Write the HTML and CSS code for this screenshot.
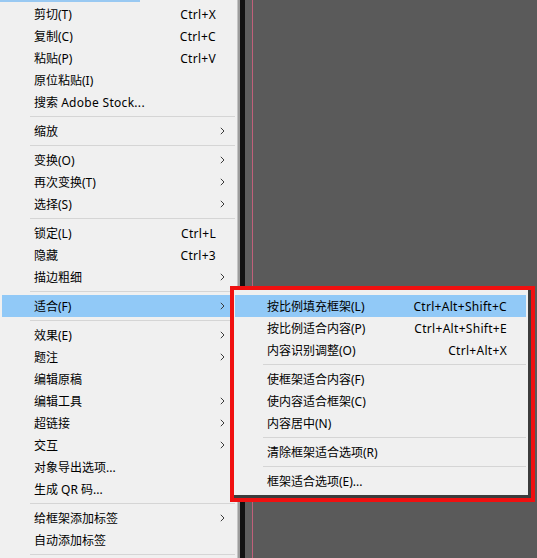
FILE: index.html
```html
<!DOCTYPE html>
<html lang="zh-CN">

<head>
    <meta charset="UTF-8">
    <meta name="viewport" content="width=device-width, initial-scale=1.0">
    <title>适合菜单</title>
    <link rel="stylesheet" href="styles.css">
</head>

<body>
    <div class="app">
        <div class="menu">
            <div class="menubar-hint"></div>
            <div class="item"><span class="label">剪切(T)</span><span class="key">Ctrl+X</span><span class="arrow"></span></div>
            <div class="item"><span class="label">复制(C)</span><span class="key">Ctrl+C</span><span class="arrow"></span></div>
            <div class="item"><span class="label">粘贴(P)</span><span class="key">Ctrl+V</span><span class="arrow"></span></div>
            <div class="item"><span class="label">原位粘贴(I)</span><span class="key"></span><span class="arrow"></span></div>
            <div class="item"><span class="label">搜索 <span class="latin">Adobe Stock...</span></span><span class="key"></span><span class="arrow"></span></div>
            <div class="sep"></div>
            <div class="item"><span class="label">缩放</span><span class="key"></span><span class="arrow"><svg width="5" height="8" viewBox="0 0 5 8"><path d="M0.8 0.8 L4 4 L0.8 7.2" /></svg></span></div>
            <div class="sep"></div>
            <div class="item"><span class="label">变换(O)</span><span class="key"></span><span class="arrow"><svg width="5" height="8" viewBox="0 0 5 8"><path d="M0.8 0.8 L4 4 L0.8 7.2" /></svg></span></div>
            <div class="item"><span class="label">再次变换(T)</span><span class="key"></span><span class="arrow"><svg width="5" height="8" viewBox="0 0 5 8"><path d="M0.8 0.8 L4 4 L0.8 7.2" /></svg></span></div>
            <div class="item"><span class="label">选择(S)</span><span class="key"></span><span class="arrow"><svg width="5" height="8" viewBox="0 0 5 8"><path d="M0.8 0.8 L4 4 L0.8 7.2" /></svg></span></div>
            <div class="sep"></div>
            <div class="item"><span class="label">锁定(L)</span><span class="key">Ctrl+L</span><span class="arrow"></span></div>
            <div class="item"><span class="label">隐藏</span><span class="key">Ctrl+3</span><span class="arrow"></span></div>
            <div class="item"><span class="label">描边粗细</span><span class="key"></span><span class="arrow"><svg width="5" height="8" viewBox="0 0 5 8"><path d="M0.8 0.8 L4 4 L0.8 7.2" /></svg></span></div>
            <div class="sep"></div>
            <div class="item active"><span class="label">适合(F)</span><span class="key"></span><span class="arrow"><svg width="5" height="8" viewBox="0 0 5 8"><path d="M0.8 0.8 L4 4 L0.8 7.2" /></svg></span></div>
            <div class="sep"></div>
            <div class="item"><span class="label">效果(E)</span><span class="key"></span><span class="arrow"><svg width="5" height="8" viewBox="0 0 5 8"><path d="M0.8 0.8 L4 4 L0.8 7.2" /></svg></span></div>
            <div class="item"><span class="label">题注</span><span class="key"></span><span class="arrow"><svg width="5" height="8" viewBox="0 0 5 8"><path d="M0.8 0.8 L4 4 L0.8 7.2" /></svg></span></div>
            <div class="item"><span class="label">编辑原稿</span><span class="key"></span><span class="arrow"></span></div>
            <div class="item"><span class="label">编辑工具</span><span class="key"></span><span class="arrow"><svg width="5" height="8" viewBox="0 0 5 8"><path d="M0.8 0.8 L4 4 L0.8 7.2" /></svg></span></div>
            <div class="item"><span class="label">超链接</span><span class="key"></span><span class="arrow"><svg width="5" height="8" viewBox="0 0 5 8"><path d="M0.8 0.8 L4 4 L0.8 7.2" /></svg></span></div>
            <div class="item"><span class="label">交互</span><span class="key"></span><span class="arrow"><svg width="5" height="8" viewBox="0 0 5 8"><path d="M0.8 0.8 L4 4 L0.8 7.2" /></svg></span></div>
            <div class="item"><span class="label">对象导出选项...</span><span class="key"></span><span class="arrow"></span></div>
            <div class="item"><span class="label">生成 QR 码...</span><span class="key"></span><span class="arrow"></span></div>
            <div class="sep"></div>
            <div class="item"><span class="label">给框架添加标签</span><span class="key"></span><span class="arrow"><svg width="5" height="8" viewBox="0 0 5 8"><path d="M0.8 0.8 L4 4 L0.8 7.2" /></svg></span></div>
            <div class="item"><span class="label">自动添加标签</span><span class="key"></span><span class="arrow"></span></div>
            <div class="sep"></div>
        </div>

        <div class="pasteboard">
            <div class="page-edge"></div>
            <div class="bleed"></div>
            <div class="guide"></div>
            <div class="canvas"></div>
        </div>

        <!-- submenu of 适合, outlined in red -->
        <div class="highlight-box">
            <div class="submenu">
                <div class="item active"><span class="label">按比例填充框架(L)</span><span class="key">Ctrl+Alt+Shift+C</span></div>
                <div class="item"><span class="label">按比例适合内容(P)</span><span class="key">Ctrl+Alt+Shift+E</span></div>
                <div class="item"><span class="label">内容识别调整(O)</span><span class="key">Ctrl+Alt+X</span></div>
                <div class="sep"></div>
                <div class="item"><span class="label">使框架适合内容(F)</span></div>
                <div class="item"><span class="label">使内容适合框架(C)</span></div>
                <div class="item"><span class="label">内容居中(N)</span></div>
                <div class="sep"></div>
                <div class="item"><span class="label">清除框架适合选项(R)</span></div>
                <div class="sep"></div>
                <div class="item"><span class="label">框架适合选项(E)...</span></div>
            </div>
        </div>
    </div>
</body>

</html>
```

FILE: styles.css
```css
body {
    margin: 0px;
    font-family: "Noto Sans", "Noto Sans CJK SC", sans-serif;
    font-size: 12px;
    color: #000;
    overflow: hidden;
}

.app {
    position: relative;
    display: flex;
    width: 537px;
    height: 558px;
    overflow: hidden;
}

/* main context menu */
.menu {
    width: 237px;
    flex: none;
    padding-top: 1px;
    background-color: #f0f0f0;
    border-right: 1px solid #c4c4c4;
}

.menubar-hint {
    width: 140px;
    height: 2px;
    margin-top: -1px;
    margin-bottom: 1px;
    background-color: #99c9f2;
}

.menu .item {
    display: flex;
    align-items: center;
    height: 22px;
    margin: 0px 4px 0px 2px;
    padding-left: 32px;
    padding-right: 3px;
    white-space: nowrap;
}

.item.active {
    background-color: #91c9f7;
}

.item .label {
    flex: 1;
}

.item .key,
.item .latin {
    letter-spacing: 0.3px;
}

.menu .arrow {
    display: flex;
    align-items: center;
    width: 10px;
    height: 22px;
    padding-left: 4px;
}

.arrow svg path {
    fill: none;
    stroke: #3c3c3c;
    stroke-width: 1;
}

.menu .sep {
    height: 1px;
    margin: 3px 2px 3px 30px;
    background-color: #d5d5d5;
}

/* dark pasteboard on the right */
.pasteboard {
    display: flex;
    flex: 1;
    border-left: 2px solid #9c9c9c;
    background-color: #5a5a5a;
}

.page-edge {
    width: 5px;
    background-color: #121212;
}

.bleed {
    width: 7px;
    background-color: #5e5e5e;
}

.guide {
    width: 1px;
    background-color: #c0607a;
}

.canvas {
    flex: 1;
}

/* submenu with red outline */
.highlight-box {
    position: absolute;
    left: 230px;
    top: 286px;
    width: 297px;
    height: 208px;
    border: 4px solid #f01010;
    background-color: #3c3c3c;
}

.submenu {
    width: 294px;
    height: 205px;
    box-sizing: border-box;
    padding-top: 5px;
    background-color: #f0f0f0;
}

.submenu .item {
    display: flex;
    align-items: center;
    height: 22px;
    margin: 0px 2px 0px 1px;
    padding-left: 32px;
    padding-right: 19px;
    white-space: nowrap;
}

.submenu .sep {
    height: 1px;
    margin: 3px 2px 3px 29px;
    background-color: #d5d5d5;
}
```
